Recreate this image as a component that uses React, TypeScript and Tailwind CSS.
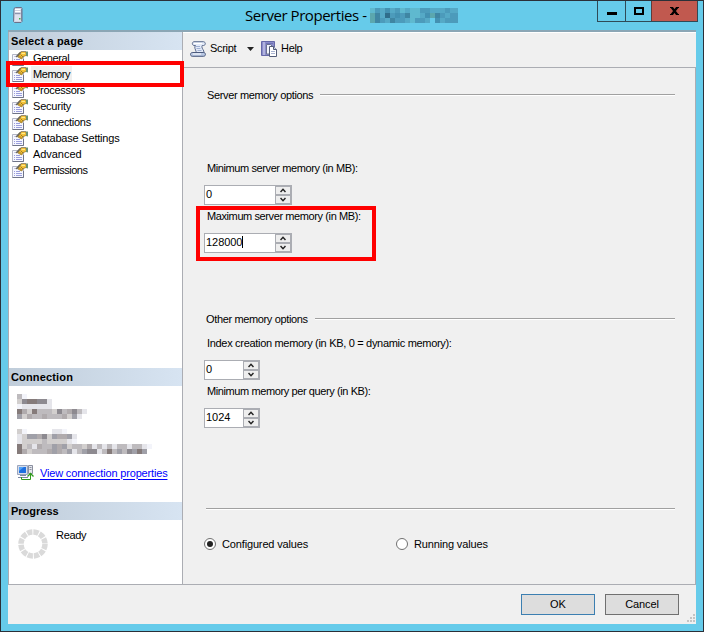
import { useState } from "react";

const PAGES = [
  { label: "General", tracking: "tracking-[-0.4px]" },
  { label: "Memory", tracking: "tracking-[-0.45px]" },
  { label: "Processors", tracking: "tracking-[-0.3px]" },
  { label: "Security", tracking: "tracking-[-0.2px]" },
  { label: "Connections", tracking: "tracking-[-0.3px]" },
  { label: "Database Settings", tracking: "tracking-[-0.2px]" },
  { label: "Advanced", tracking: "tracking-[-0.05px]" },
  { label: "Permissions", tracking: "tracking-[-0.5px]" },
];

// One character per 5px cell, looked up in the palettes below. Spaces stay empty.
const TITLE_CELLS = [
  "acbdbcabaaccbbbcbb",
  "hfbgcdcfaabdhfcbcc",
  "hfcbfccbaccb dbccc",
];
const TITLE_COLORS: Record<string, string> = {
  a: "#5fb9cf",
  b: "#55a9c6",
  c: "#4c9bbb",
  d: "#4391b2",
  f: "#3f86a3",
  g: "#2f6d8b",
  h: "#5ba7ae",
};

const SERVER_CELLS = ["cz", "bfggffa", "zaaaaaa", "gdbgcccbfcdfca", "ebdccdcccdbea"];
const CONNECTION_CELLS = [
  "bz     aaz",
  "abeedfbeddea",
  "abbbbcbbbbaz",
  "gbcadccedebccbdacacaccaccaz",
  "gdbcccdedceaceffacgcecfege",
];
const GRAY_COLORS: Record<string, string> = {
  z: "#f3f4fa",
  a: "#e5e5ea",
  b: "#d2cfce",
  c: "#bebbbe",
  d: "#b0abad",
  e: "#a0a0a8",
  f: "#8d8a90",
  g: "#857b7a",
};

function Mosaic({
  rows,
  colors,
  width,
}: {
  rows: string[];
  colors: Record<string, string>;
  width: number;
}) {
  return (
    <svg width={width} height={rows.length * 5} shapeRendering="crispEdges" className="block shrink-0">
      {rows.flatMap((row, y) =>
        row
          .split("")
          .map((cell, x) =>
            colors[cell] ? (
              <rect key={`${x}-${y}`} x={x * 5} y={y * 5} width="5" height="5" fill={colors[cell]} />
            ) : null,
          ),
      )}
    </svg>
  );
}

function ServerIcon() {
  return (
    <svg width="10" height="16" className="block">
      <path d="M1 1.500 2.500.500h6l.5 1v13l-1 1H1.500L.500 14.500z" fill="#cfd3e2" stroke="#6a718a" />
      <path d="M2 2.500h5.500M2 4.500h5.500" stroke="#fff" />
      <path d="M2 6.500h5.500" stroke="#8d95ad" />
      <path d="M2 8h5.500v6H2z" fill="#dfe2ee" />
      <path d="M8.500 2v12" stroke="#7d849c" />
      <path d="M6 11h1.500v1.500H6z" fill="#3fae49" />
    </svg>
  );
}

function PageIcon() {
  return (
    <svg width="16" height="16" className="block shrink-0">
      <path d="M.5 4.500h11v11H.5z" fill="#f6f7ff" stroke="#b3b6c6" />
      <path d="M11.500 9v6.500H.5" fill="none" stroke="#6f7488" />
      <path d="M2 9.500h1M4 9.500h4M2 11.500h1M4 11.500h6M2 13.500h1M4 13.500h6" stroke="#9a9edc" />
      <path d="M2 6.500h2" stroke="#c5c8e6" />
      <path d="M6.500 4 9 1.500h4.500L15 5l-3.500 1.500L9.500 9 6 7z" fill="#f3c136" stroke="#8b6a1c" strokeWidth=".7" />
      <path d="M3.500 6.500 8 2l1.500.5L5 7.500z" fill="#6b685e" />
      <path d="m7 5.500 3 3M8.500 4.500l2.500 2.500" stroke="#8b6a1c" strokeWidth=".8" />
      <path d="M9.500 3.500h3.500" stroke="#ffe98a" />
      <path d="M14 1.500h2v5l-2-.5z" fill="#6c9272" />
      <path d="M9 1.500h5" stroke="#9a8d72" />
    </svg>
  );
}

function ScriptIcon() {
  return (
    <svg width="16" height="16" className="block shrink-0">
      <path
        d="M4 .700h9.500c2.400.3 2.400 3.600 0 3.800h-1.300c-1 1.800.5 3.400 1.600 5.500v2H6c.6-2.200-1.400-3.800-1.200-6 .1-.800.700-1.300.700-1.500H4c-2.200-.3-2.200-3.500 0-3.800z"
        fill="#e3eaf8"
        stroke="#5b6a8c"
      />
      <path d="M2.200 11.500h11.300c2.600 0 2.600 3.800 0 3.800H2.200c-2.300-.3-2.300-3.500 0-3.800z" fill="#b9c8e4" stroke="#4c5b7e" />
      <path d="M6 5.500h4M6.500 7.500h4M7.500 9.500h4" stroke="#9fb0d4" />
      <path d="M4 2.500h8M3 13h8" stroke="#fff" />
    </svg>
  );
}

function HelpIcon() {
  return (
    <svg width="16" height="16" className="block shrink-0">
      <path d="M.5.500h13v14H.5z" fill="#8a8cc9" stroke="#6668a8" />
      <path d="M3 1v13" stroke="#d9daf3" />
      <path d="M5 2.500h7" stroke="#6d70b5" />
      <path d="M5.500 3.500h4l1.500 1.500v8H5.500z" fill="#f2f4fc" stroke="#69708f" />
      <path d="M8.500 5.500h4l3 3v7h-7z" fill="#fff" stroke="#535c78" />
      <path d="M12.500 5.500v3h3" fill="#c9d1e6" stroke="#535c78" />
      <path d="M10 10.500h4M10 12.500h4" stroke="#a9b4d2" />
    </svg>
  );
}

function ConnectionIcon() {
  return (
    <svg width="17" height="16" className="block shrink-0">
      <path d="M.5.500h10v9H.5z" fill="#d5dcea" stroke="#9aa5bd" />
      <path d="M2 2h7v6H2z" fill="#1d6fe0" />
      <path d="M2 2h5L2 6z" fill="#56a3f5" />
      <path d="M3 10.500h6M1 12.500h10" stroke="#7c88a3" />
      <path d="M11.500.500h4v8h-4z" fill="#e6e8ee" stroke="#8a8f9f" />
      <path d="M12.500 2.500h2M12.500 4.500h2" stroke="#8a8f9f" />
      <path d="M4.500 12v2.500h9V9" fill="none" stroke="#2f9a1c" />
      <path d="m10.500 11.500 3-3 3 3" fill="none" stroke="#2f9a1c" strokeWidth="1.300" />
    </svg>
  );
}

function PanelHeader({ title, tracking }: { title: string; tracking: string }) {
  return (
    <div className="h-[18px] shrink-0 bg-linear-to-r from-[#c0cdda] to-[#d7e4f2] pl-[2px] font-bold leading-[18px]">
      <span className={tracking}>{title}</span>
    </div>
  );
}

function Rule() {
  return <div className="h-[2px] flex-1 border-t border-[#a0a0a0] bg-white" />;
}

function GroupTitle({ title, className }: { title: string; className: string }) {
  return (
    <div className="flex h-4 items-center leading-4">
      <span className={`shrink-0 whitespace-nowrap tracking-[-0.36px] ${className}`}>{title}</span>
      <Rule />
    </div>
  );
}

function Spinner({
  value,
  onChange,
  width,
  focused,
}: {
  value: number;
  onChange: (value: number) => void;
  width: string;
  focused?: boolean;
}) {
  return (
    <div className={`flex h-5 border border-[#abadb3] bg-white ${width}`}>
      <div className="flex flex-1 items-start pl-px leading-4">
        <span className="tracking-[-0.05px]">{value}</span>
        {focused && <span className="mt-[2px] h-3 w-px bg-black" />}
      </div>
      <div className="flex w-4 flex-col gap-[2px] bg-[#abadb3] p-px">
        <button className="flex h-[7px] items-center justify-center bg-[#eeeeee]" onClick={() => onChange(value + 1)}>
          <svg width="6" height="5">
            <path d="M.5 4 3 1.300 5.500 4" fill="none" stroke="#222" strokeWidth="1.500" />
          </svg>
        </button>
        <button
          className="flex h-[7px] items-center justify-center bg-[#eeeeee]"
          onClick={() => onChange(Math.max(0, value - 1))}
        >
          <svg width="6" height="5">
            <path d="M.5 1 3 3.700 5.500 1" fill="none" stroke="#222" strokeWidth="1.500" />
          </svg>
        </button>
      </div>
    </div>
  );
}

function Radio({
  label,
  checked,
  onSelect,
}: {
  label: string;
  checked: boolean;
  onSelect: () => void;
}) {
  return (
    <button className="flex h-4 w-[192px] items-center gap-[6px]" onClick={onSelect}>
      <span className="mb-px flex size-3 items-center justify-center rounded-full border border-[#707070] bg-white">
        {checked && <span className="size-[6px] rounded-full bg-[#222]" />}
      </span>
      <span className="tracking-[-0.15px]">{label}</span>
    </button>
  );
}

export default function App() {
  const [page, setPage] = useState("Memory");
  const [minMemory, setMinMemory] = useState(0);
  const [maxMemory, setMaxMemory] = useState(128000);
  const [indexMemory, setIndexMemory] = useState(0);
  const [queryMemory, setQueryMemory] = useState(1024);
  const [values, setValues] = useState("configured");

  return (
    <div className="relative flex h-[632px] w-[704px] flex-col overflow-hidden border border-[#2b3038] bg-[#66cbea] px-[7px] pb-[7px] font-['Liberation_Sans',Arial,sans-serif] text-[11px] text-black">
      <div className="-mr-[2px] flex h-[29px] shrink-0">
        <div className="w-[237px] pl-[5px] pt-[6px]">
          <ServerIcon />
        </div>
        <div className="flex w-[352px] items-start">
          <span className="w-[125px] whitespace-nowrap pt-1 font-['Open_Sans','Noto_Sans',sans-serif] text-[15px] leading-5 tracking-[-0.45px]">
            Server Properties -
          </span>
          <div className="pt-[7px]">
            <Mosaic rows={TITLE_CELLS} colors={TITLE_COLORS} width={88} />
          </div>
        </div>
        <div className="flex h-[21px] w-[101px] shrink-0 border-x border-b border-[#2f4a56]">
          <button className="flex w-[27px] items-start justify-center pt-[11px]">
            <span className="h-[3px] w-[10px] bg-black" />
          </button>
          <button className="flex w-[26px] items-start justify-center border-l border-[#2f4a56] pt-[6px]">
            <span className="h-2 w-[10px] border-2 border-black" />
          </button>
          <button className="flex flex-1 items-start justify-center border-l border-[#5f3a3a] bg-[#c1594f] pt-[6px]">
            <svg width="9" height="8">
              <path d="M1.500 0 7.500 8M7.500 0 1.500 8" stroke="#000" strokeWidth="2.300" />
              <path d="M0 .5h3M6 .5h3M0 7.500h3M6 7.500h3" stroke="#000" />
            </svg>
          </button>
        </div>
      </div>

      <div className="flex min-h-0 flex-1 flex-col border-t-2 border-[#8ba6b5] bg-[#f0f0f0]">
        <div className="flex h-[553px] shrink-0 border-b border-[#abadb3]">
          <aside className="flex w-[175px] flex-col border-x border-[#abadb3] bg-white">
            <PanelHeader title="Select a page" tracking="tracking-[0.15px]" />
            <nav className="flex h-[318px] shrink-0 flex-col pl-[3px]">
              {PAGES.map(({ label, tracking }) => (
                <button key={label} className="flex h-4 items-center gap-[3px]" onClick={() => setPage(label)}>
                  <PageIcon />
                  <span
                    className={`h-4 px-[2px] leading-4 ${tracking} ${page === label ? "bg-[#efefef]" : ""}`}
                  >
                    {label}
                  </span>
                </button>
              ))}
            </nav>
            <PanelHeader title="Connection" tracking="tracking-[0.15px]" />
            <div className="flex h-[116px] shrink-0 flex-col pl-2 pt-2">
              <Mosaic rows={SERVER_CELLS} colors={GRAY_COLORS} width={140} />
              <div className="mt-[10px]">
                <Mosaic rows={CONNECTION_CELLS} colors={GRAY_COLORS} width={140} />
              </div>
              <div className="mt-[11px] flex h-4 items-center gap-[6px]">
                <ConnectionIcon />
                <a href="#" className="whitespace-nowrap tracking-[-0.17px] text-[#0000ff] underline underline-offset-2">
                  View connection properties
                </a>
              </div>
            </div>
            <PanelHeader title="Progress" tracking="tracking-[0px]" />
            <div className="flex pl-[9px]">
              <svg width="30" height="30" className="mt-[9px]">
                <circle cx="15" cy="15" r="12" fill="none" stroke="#dadada" strokeWidth="5.500" strokeDasharray="5.283 1" />
              </svg>
              <span className="pl-[8px] pt-[7px] leading-4 tracking-[-0.3px]">Ready</span>
            </div>
          </aside>

          <main className="flex flex-1 flex-col">
            <div className="flex h-9 shrink-0 items-center border-b border-[#abadb3] border-t border-t-white pb-[3px] pl-[7px]">
              <ScriptIcon />
              <span className="w-[41px] shrink-0 pl-1 tracking-[-0.3px]">Script</span>
              <svg width="7" height="4">
                <path d="M0 0h7L3.500 4z" fill="#222" />
              </svg>
              <div className="pl-[7px]">
                <HelpIcon />
              </div>
              <span className="pl-1 tracking-[-0.3px]">Help</span>
            </div>
            <div className="flex flex-1 flex-col border-r border-[#abadb3] pl-[21px] pr-5 pt-[19px]">
              <GroupTitle title="Server memory options" className="w-[116px] pl-[3px]" />
              <span className="mt-[57px] pl-[3px] leading-4 tracking-[-0.4px]">Minimum server memory (in MB):</span>
              <div className="mt-[9px]">
                <Spinner value={minMemory} onChange={setMinMemory} width="w-[88px]" />
              </div>
              <span className="mt-[3px] pl-[3px] leading-4 tracking-[-0.4px]">Maximum server memory (in MB):</span>
              <div className="mt-[9px]">
                <Spinner value={maxMemory} onChange={setMaxMemory} width="w-[88px]" focused />
              </div>
              <div className="mt-[58px]">
                <GroupTitle title="Other memory options" className="w-[111px] pl-[2px]" />
              </div>
              <span className="mt-2 pl-[3px] leading-4 tracking-[-0.31px]">
                Index creation memory (in KB, 0 = dynamic memory):
              </span>
              <div className="mt-[9px]">
                <Spinner value={indexMemory} onChange={setIndexMemory} width="w-[56px]" />
              </div>
              <span className="mt-[3px] pl-[3px] leading-4 tracking-[-0.4px]">Minimum memory per query (in KB):</span>
              <div className="mt-[9px]">
                <Spinner value={queryMemory} onChange={setQueryMemory} width="w-[56px]" />
              </div>
              <div className="mt-[80px] flex pl-[2px]">
                <Rule />
              </div>
              <div className="mt-[26px] flex">
                <Radio
                  label="Configured values"
                  checked={values === "configured"}
                  onSelect={() => setValues("configured")}
                />
                <Radio label="Running values" checked={values === "running"} onSelect={() => setValues("running")} />
              </div>
            </div>
          </main>
        </div>

        <div className="flex flex-1 items-start justify-end gap-[10px] pt-[9px] pr-[17px]">
          <button className="h-[21px] w-[74px] border border-[#3c7fb1] bg-[#dddddd]">OK</button>
          <button className="h-[21px] w-[74px] border border-[#707070] bg-[#dddddd] tracking-[-0.1px]">Cancel</button>
        </div>
      </div>

      <svg width="8" height="8" className="absolute bottom-[9px] right-[8px]" shapeRendering="crispEdges">
        <path d="M6 0h2v2H6zM3 3h2v2H3zM6 3h2v2H6zM0 6h2v2H0zM3 6h2v2H3zM6 6h2v2H6z" fill="#c4c4c4" />
      </svg>
      <div className="pointer-events-none absolute left-[5px] top-[60px] h-[26px] w-[178px] border-4 border-[#ff0000]" />
      <div className="pointer-events-none absolute left-[195px] top-[205px] h-[55px] w-[180px] border-4 border-[#ff0000]" />
    </div>
  );
}
